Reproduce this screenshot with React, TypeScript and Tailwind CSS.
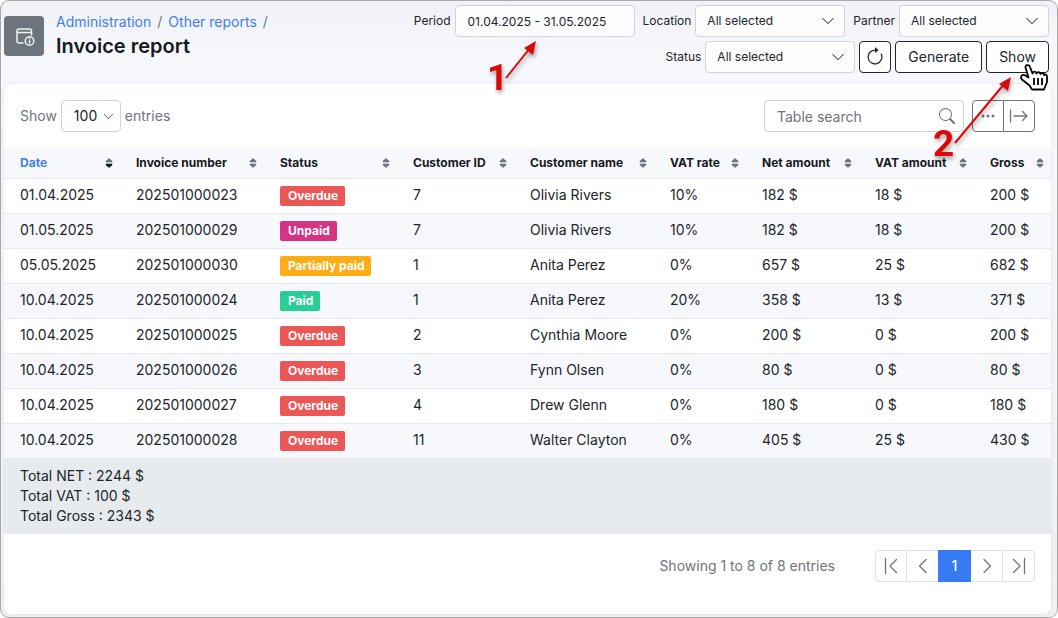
import React from "react";
import { BsArrowClockwise, BsChevronDown, BsSearch, BsThreeDots } from "react-icons/bs";

type Status = "Overdue" | "Unpaid" | "Partially paid" | "Paid";

interface Invoice {
  date: string;
  number: string;
  status: Status;
  customerId: number;
  customer: string;
  rate: string;
  net: string;
  vat: string;
  gross: string;
}

const invoices: Invoice[] = [
  { date: "01.04.2025", number: "202501000023", status: "Overdue", customerId: 7, customer: "Olivia Rivers", rate: "10%", net: "182 $", vat: "18 $", gross: "200 $" },
  { date: "01.05.2025", number: "202501000029", status: "Unpaid", customerId: 7, customer: "Olivia Rivers", rate: "10%", net: "182 $", vat: "18 $", gross: "200 $" },
  { date: "05.05.2025", number: "202501000030", status: "Partially paid", customerId: 1, customer: "Anita Perez", rate: "0%", net: "657 $", vat: "25 $", gross: "682 $" },
  { date: "10.04.2025", number: "202501000024", status: "Paid", customerId: 1, customer: "Anita Perez", rate: "20%", net: "358 $", vat: "13 $", gross: "371 $" },
  { date: "10.04.2025", number: "202501000025", status: "Overdue", customerId: 2, customer: "Cynthia Moore", rate: "0%", net: "200 $", vat: "0 $", gross: "200 $" },
  { date: "10.04.2025", number: "202501000026", status: "Overdue", customerId: 3, customer: "Fynn Olsen", rate: "0%", net: "80 $", vat: "0 $", gross: "80 $" },
  { date: "10.04.2025", number: "202501000027", status: "Overdue", customerId: 4, customer: "Drew Glenn", rate: "0%", net: "180 $", vat: "0 $", gross: "180 $" },
  { date: "10.04.2025", number: "202501000028", status: "Overdue", customerId: 11, customer: "Walter Clayton", rate: "0%", net: "405 $", vat: "25 $", gross: "430 $" },
];

const badgeColors: Record<Status, string> = {
  Overdue: "bg-[#eb5757]",
  Unpaid: "bg-[#d63384]",
  "Partially paid": "bg-[#ffad14]",
  Paid: "bg-[#2acd95]",
};

const columns = [
  { label: "Date", width: "w-[116px]" },
  { label: "Invoice number", width: "w-[144px]" },
  { label: "Status", width: "w-[133px]" },
  { label: "Customer ID", width: "w-[117px]" },
  { label: "Customer name", width: "w-[140px]" },
  { label: "VAT rate", width: "w-[92px]" },
  { label: "Net amount", width: "w-[113px]" },
  { label: "VAT amount", width: "w-[115px]" },
  { label: "Gross", width: "w-[77px]" },
];

const glyphs = {
  first: "M4.500 2.500v15M15.500 3.500 9 10l6.500 6.500",
  previous: "M13 3.500 6.500 10l6.500 6.500",
  next: "M7 3.500 13.500 10 7 16.500",
  last: "M15.500 2.500v15M4.500 3.500 11 10l-6.500 6.500",
  expand: "M1.500 4v12M5 10h13M13.500 5.500 18 10l-4.500 4.500",
};

function Glyph({ name }: { name: keyof typeof glyphs }) {
  return (
    <svg viewBox="0 0 20 20" className="size-5" fill="none" stroke="currentColor" strokeWidth="1.3" strokeLinecap="round" strokeLinejoin="round" aria-hidden="true">
      <path d={glyphs[name]} />
    </svg>
  );
}

function SortIcon({ active }: { active: boolean }) {
  const lower = active ? "#111418" : "#6c757d";
  return (
    <svg viewBox="0 0 8 10" className="h-[10px] w-2 shrink-0" aria-hidden="true">
      <path d="M4 0.500 7 3v1H1V3z" fill="#6c757d" stroke="#6c757d" strokeWidth="0.6" strokeLinejoin="round" />
      <path d="M1 6h6v1L4 9.500 1 7z" fill={lower} stroke={lower} strokeWidth="0.6" strokeLinejoin="round" />
    </svg>
  );
}

function Filter({ id, label }: { id: string; label: string }) {
  return (
    <div className="flex items-center gap-1">
      <label htmlFor={id} className="text-xs">{label}</label>
      <div className="relative">
        <select id={id} className="h-8 w-[150px] appearance-none rounded border border-[#ced4da] bg-[#fdfdfe] pr-8 pl-[11px] text-xs">
          <option>All selected</option>
        </select>
        <BsChevronDown className="pointer-events-none absolute top-[9px] right-[10px] size-[14px] text-[#495057]" />
      </div>
    </div>
  );
}

interface CalloutProps {
  digit: string;
  className: string;
  digitY: number;
  shaft: string;
  head: string;
}

function Callout({ digit, className, digitY, shaft, head }: CalloutProps) {
  return (
    <svg className={"pointer-events-none absolute z-10 size-[90px] overflow-visible drop-shadow-[1px_3px_2px_rgba(0,0,0,0.35)] " + className}>
      <text x={3} y={digitY} className="fill-[#dc0808] font-['Roboto',sans-serif] text-[37px] font-bold">{digit}</text>
      <path d={shaft} stroke="#dc0808" strokeWidth="2" />
      <path d={head} fill="#dc0808" />
    </svg>
  );
}

const pageButton = "-ml-px flex h-8 w-[33px] items-center justify-center border border-[#dee2e6] text-[#6c757d]";

export default function App() {
  return (
    <div className="bg-white font-['Inter',sans-serif] text-sm text-[#212529]">
      <div className="rounded-[9px] border border-[#a9a9a9] bg-linear-to-b from-[#f1f2f7] via-[#f7f8fc] via-10% to-[#f0f1f5] pt-1 pr-[6px] pb-[3px] pl-[3px]">
        <header className="flex justify-between pr-[2px]">
          <div className="flex gap-3 pt-[11px]">
            <div className="flex size-10 shrink-0 items-center justify-center rounded bg-[#6c757d] text-[#f1f3f5]">
              <svg viewBox="0 0 20 20" className="mt-[2px] ml-[2px] size-5" fill="none" stroke="currentColor" strokeWidth="1.5">
                <path d="M8.500 16H4a2 2 0 0 1-2-2V4a2 2 0 0 1 2-2h10.500a2 2 0 0 1 2 2v4.500" />
                <path d="M2 5.500h14.500" />
                <circle cx="14.500" cy="14" r="4.300" />
                <path d="M14.500 13.200v3.300M14.500 11.200v1.200" />
              </svg>
            </div>
            <div className="-mt-[5px]">
              <nav aria-label="Breadcrumb" className="flex gap-[6px] leading-[22px] text-[#6c757d]">
                <a href="#administration" className="text-[#3c7ff5]">Administration</a>
                <span>/</span>
                <a href="#reports" className="text-[#3c7ff5]">Other reports</a>
                <span>/</span>
              </nav>
              <h1 className="text-xl leading-[26px] font-semibold text-[#16191d]">Invoice report</h1>
            </div>
          </div>
          <div className="flex flex-col items-end gap-1">
            <div className="flex gap-2">
              <div className="relative flex items-center gap-1">
                <label htmlFor="period" className="text-xs">Period</label>
                <input id="period" defaultValue="01.04.2025 - 31.05.2025" className="h-8 w-[180px] rounded border border-[#ced4da] bg-[#fcfcfe] px-3 text-xs" />
                <Callout digit="1" className="top-[30px] left-[70px]" digitY={55} shaft="M22 43 46 13" head="M52 6 49 20 40 13z" />
              </div>
              <Filter id="location" label="Location" />
              <Filter id="partner" label="Partner" />
            </div>
            <div className="flex gap-1">
              <Filter id="status" label="Status" />
              <button type="button" aria-label="Refresh" className="flex size-8 items-center justify-center rounded border border-[#212529] bg-white"><BsArrowClockwise className="size-5" /></button>
              <button type="button" className="h-8 rounded border border-[#212529] bg-white px-3">Generate</button>
              <div className="relative">
                <button type="button" className="h-8 rounded border border-[#212529] bg-white px-3">Show</button>
                <Callout digit="2" className="top-[30px] -left-[56px]" digitY={85} shaft="M25 72 75 12" head="M81 6 78 20 69 13z" />
                <svg viewBox="0 0 28 28" className="pointer-events-none absolute top-[23px] left-[34px] z-20 size-7" fill="#fff" stroke="#000" strokeWidth="1.8" strokeLinejoin="round" aria-hidden="true">
                  <path d="M5.500 3.500C5 1 9 0 10 3l2.500 6.500C13 7 16 7 16.500 9.500 17.500 7.500 20 8 20.500 10c1-1.500 3.500-1 3.500 1 1-1 3-.5 3 1.500V18l-3 7.500H12l-2.500-4L2 15.500C0 13.500 1.500 10 4.500 11l4 2.500z" />
                  <path d="M14 14v7M18 14v7M22 14v7" />
                </svg>
              </div>
            </div>
          </div>
        </header>

        <main className="mt-[11px] rounded-lg bg-white pb-8 shadow-[0_0_4px_rgba(40,50,80,0.08)]">
          <div className="flex items-center justify-between p-4">
            <label className="flex items-center gap-1 text-[#6c757d]">
              Show
              <span className="relative">
                <select className="h-8 w-[60px] appearance-none rounded border border-[#ced4da] bg-white pr-4 pl-3 text-[#212529]">
                  <option>100</option>
                </select>
                <BsChevronDown className="pointer-events-none absolute top-[11px] right-[7px] size-[11px] text-[#495057]" />
              </span>
              entries
            </label>
            <div className="flex gap-2">
              <div className="relative">
                <input aria-label="Table search" placeholder="Table search" className="h-8 w-[200px] rounded border border-[#ced4da] px-3 placeholder:text-[#6c757d]" />
                <BsSearch className="absolute top-2 right-[9px] size-4 text-[#6c757d]" />
              </div>
              <div className="flex text-[#6c757d]">
                <button type="button" aria-label="More" className="flex size-8 items-center justify-center rounded-l border border-[#6c757d]"><BsThreeDots className="size-4" /></button>
                <button type="button" aria-label="Expand" className="-ml-px flex size-8 items-center justify-center rounded-r border border-[#6c757d]"><Glyph name="expand" /></button>
              </div>
            </div>
          </div>

          <table className="w-full table-fixed border-separate border-spacing-0 text-left">
            <thead>
              <tr className="bg-[#f7f8fc]">
                {columns.map((column, i) => (
                  <th key={column.label} className={column.width + " border-b border-[#e6e9ed] py-[5px] pr-[7px] pl-4 text-xs leading-5 font-bold whitespace-nowrap"}>
                    <div className="flex items-center justify-between">
                      <span className={i === 0 ? "text-[#3c7ff5]" : "text-[#16191d]"}>{column.label}</span>
                      <SortIcon active={i === 0} />
                    </div>
                  </th>
                ))}
              </tr>
            </thead>
            <tbody className="[&_td]:h-[35px] [&_td]:border-b [&_td]:border-[#e6e9ed] [&_td]:pb-[2px] [&_td]:pl-4 [&_td]:leading-5 [&_td]:whitespace-nowrap [&_tr:last-child_td]:h-[34px] [&_tr:last-child_td]:border-b-0">
              {invoices.map((invoice) => (
                <tr key={invoice.number} className="even:bg-[#f7f8fc]">
                  <td>{invoice.date}</td>
                  <td>{invoice.number}</td>
                  <td>
                    <span className={"mt-[2px] block w-fit rounded-[2px] pr-[7px] pl-2 text-xs leading-5 font-bold text-white " + badgeColors[invoice.status]}>{invoice.status}</span>
                  </td>
                  <td>{invoice.customerId}</td>
                  <td>{invoice.customer}</td>
                  <td>{invoice.rate}</td>
                  <td>{invoice.net}</td>
                  <td>{invoice.vat}</td>
                  <td>{invoice.gross}</td>
                </tr>
              ))}
            </tbody>
            <tfoot>
              <tr className="bg-[#e8ebee]">
                <td colSpan={9} className="px-4 py-2 leading-5">
                  <p>Total NET : 2244 $</p>
                  <p>Total VAT : 100 $</p>
                  <p>Total Gross : 2343 $</p>
                </td>
              </tr>
            </tfoot>
          </table>

          <div className="mt-4 flex items-center justify-end gap-10 pr-4 text-[#6c757d]">
            <p>Showing 1 to 8 of 8 entries</p>
            <nav aria-label="Pagination" className="flex">
              <button type="button" aria-label="First page" className="flex size-8 items-center justify-center rounded-l border border-[#dee2e6] text-[#6c757d]"><Glyph name="first" /></button>
              <button type="button" aria-label="Previous page" className={pageButton}><Glyph name="previous" /></button>
              <button type="button" aria-current="page" className="z-10 -ml-px h-8 w-[33px] bg-[#367bf2] font-medium text-white">1</button>
              <button type="button" aria-label="Next page" className={pageButton}><Glyph name="next" /></button>
              <button type="button" aria-label="Last page" className={pageButton + " rounded-r"}><Glyph name="last" /></button>
            </nav>
          </div>
        </main>
      </div>
    </div>
  );
}
